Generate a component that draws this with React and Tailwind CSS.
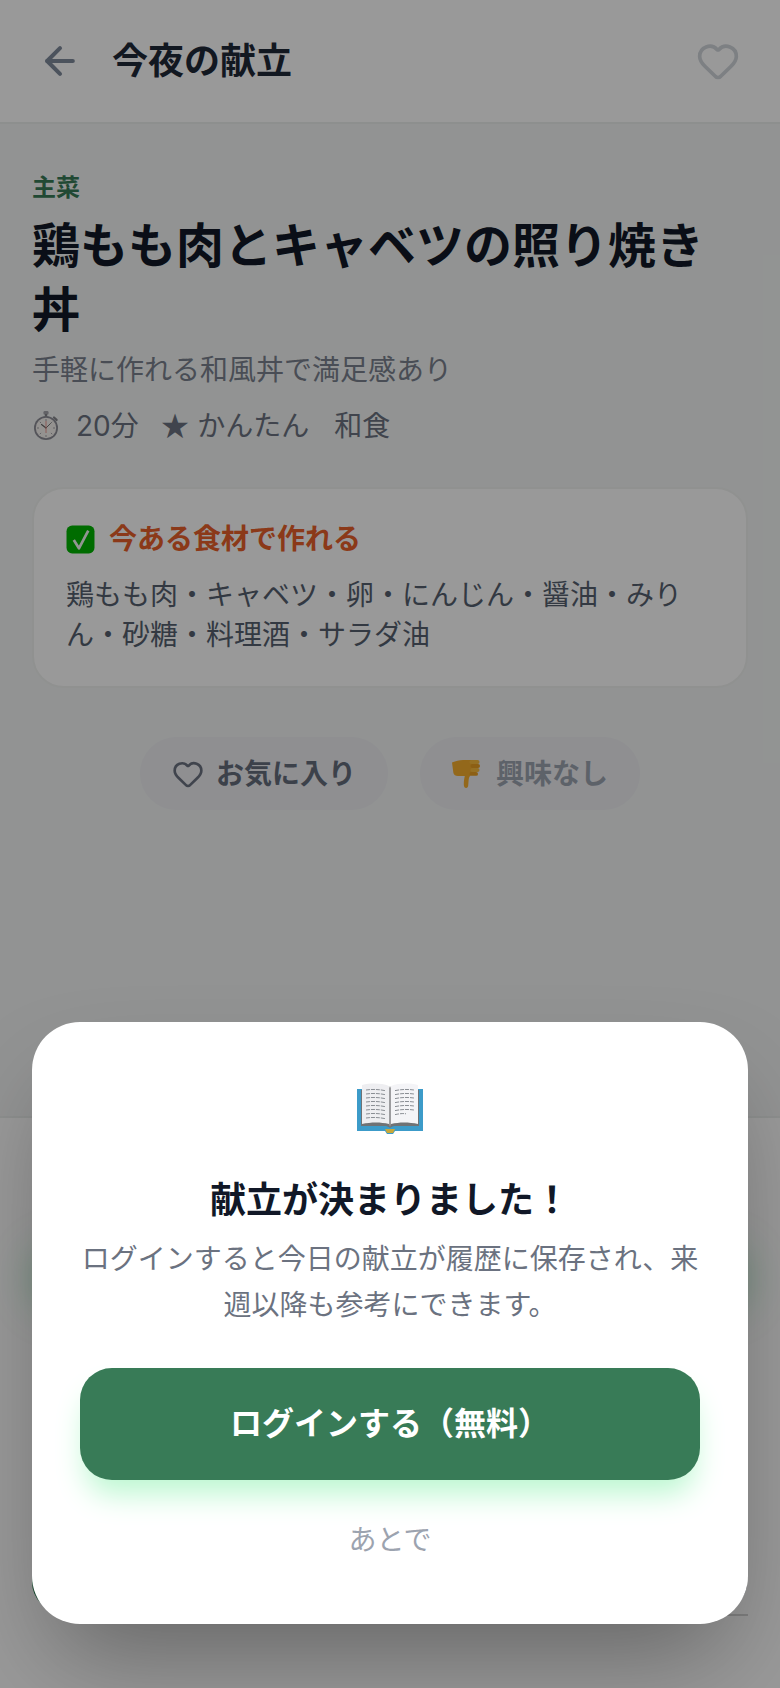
import React from "react";
import { ArrowLeft, Heart } from "lucide-react";

function Stopwatch() {
  return (
    <svg width="28" height="30" viewBox="0 0 28 30" className="shrink-0">
      <rect x="11.5" y="0" width="5" height="3.6" rx="1.2" fill="#a3a3aa" />
      <rect x="12.8" y="3" width="2.4" height="3.5" fill="#85858c" />
      <path d="M22 6.5l2.6 2.4" stroke="#85858c" strokeWidth="2.2" strokeLinecap="round" />
      <circle cx="14" cy="17" r="12" fill="#8d8d96" />
      <circle cx="14" cy="17" r="10.2" fill="#f7f4f1" />
      <path d="M14 8v2M14 24v2M5 17h2M21 17h2M7.8 10.8l1.3 1.3M20.2 10.8l-1.3 1.3M7.8 23.2l1.3-1.3M20.2 23.2l-1.3-1.3" stroke="#9a9aa0" strokeWidth="0.9" />
      <path d="M14 17L9.5 13.5" stroke="#666" strokeWidth="1.1" strokeLinecap="round" />
      <path d="M14 17L18.5 12.5" stroke="#666" strokeWidth="0.9" strokeLinecap="round" />
      <path d="M14 22V10" stroke="#e8807a" strokeWidth="0.8" />
    </svg>
  );
}

function CheckBoxEmoji() {
  return (
    <svg width="29" height="29" viewBox="0 0 28 28" className="shrink-0">
      <rect x="0.5" y="0.5" width="27" height="27" rx="5.5" fill="#00b400" />
      <path d="M7.5 14.5l5 8L21.5 5.5" fill="none" stroke="#f4f9f4" strokeWidth="2.6" strokeLinejoin="round" />
    </svg>
  );
}

function ThumbsDown() {
  return (
    <svg width="28" height="30" viewBox="0 0 28 30" className="shrink-0">
      <path d="M0 3.5C4 2 7 1 11 1h8c1.5 0 2 1 2 2.5v10c0 1-.8 1.8-2 2.6-1.6 1.2-2.2 3-2.4 5.4l-.4 5c-.1 1.6-.9 2.5-2 2.5-1.4 0-2.4-1.4-2.4-3.6 0-3.2.4-5.6 1-8.4H6c-2.6 0-4-1.2-4.6-3z" fill="#f6ae2d" />
      <rect x="17.5" y="1" width="10" height="4" rx="2" fill="#f8bb3d" />
      <rect x="18.5" y="5" width="9.5" height="4" rx="2" fill="#e99f22" />
      <rect x="18.5" y="9" width="9" height="4" rx="2" fill="#f8bb3d" />
      <rect x="17.5" y="13" width="8.5" height="3.8" rx="1.9" fill="#e99f22" />
    </svg>
  );
}

function BookEmoji() {
  return (
    <svg width="66" height="52" viewBox="0 0 66 52">
      <path d="M0 7h66v42H38l-2 3h-6l-2-3H0z" fill="#3c9bc9" />
      <path d="M4 44h25c1 0 3 1 4 2 1-1 3-2 4-2h25V8H4z" fill="#6f7275" />
      <path d="M5 3c9-2 19-2 27 1v38c-8-2-18-2-27 0z" fill="#eeeef1" />
      <path d="M61 3c-9-2-19-2-27 1v38c8-2 18-2 27 0z" fill="#f4f4f7" />
      <path d="M32 4l1 2 1-2v38l-1 3-1-3z" fill="#9c9c9f" />
      <path d="M28 47h10l-2 4h-6z" fill="#c8a83a" />
      <g stroke="#8a8e94" strokeWidth="1" strokeDasharray="4 1">
        <path d="M9 8c6-.8 12-.8 19 .6M9 12c6-.8 12-.8 19 .6M9 16c6-.8 12-.8 19 .6M9 20c6-.8 12-.8 19 .6M9 24c6-.8 12-.8 19 .6M9 28c6-.8 12-.8 19 .6M9 32c6-.8 12-.8 19 .6M9 36c6-.8 12-.8 19 .6" fill="none" />
        <path d="M38 8.6c7-1.4 13-1.4 19-.6M38 12.6c7-1.4 13-1.4 19-.6M38 16.6c7-1.4 13-1.4 19-.6M38 20.6c7-1.4 13-1.4 19-.6M38 24.6c7-1.4 13-1.4 19-.6M38 28.6c7-1.4 13-1.4 19-.6M38 32.6c6-1.2 8-1.2 11-.8" fill="none" />
      </g>
    </svg>
  );
}

export default function App() {
  return (
    <div className="relative flex h-[1688px] w-full flex-col overflow-hidden bg-[#f3f6f5] font-['Inter','Noto_Sans_CJK_JP',sans-serif]">
      <header className="flex h-[124px] shrink-0 items-center justify-between border-b-2 border-[#eceeed] bg-white pl-[38px] pr-10">
        <div className="flex items-center gap-[30px]">
          <ArrowLeft size={44} strokeWidth={2.2} className="text-[#7f8a9c]" />
          <h1 className="text-[36px] font-bold leading-[48px] text-[#1f2937]">今夜の献立</h1>
        </div>
        <Heart size={44} strokeWidth={2} className="text-[#d1d5db]" />
      </header>

      <main className="flex-1 px-8 pt-12">
        <p className="text-[24px] font-bold leading-8 text-[#387b57]">主菜</p>
        <h2 className="mt-[10px] text-[48px] font-bold leading-[64px] text-[#111827]">鶏もも肉とキャベツの照り焼き丼</h2>
        <p className="mt-2 text-[28px] leading-10 text-[#7a818e]">手軽に作れる和風丼で満足感あり</p>
        <div className="mt-4 flex items-center text-[28px] leading-10 text-[#6b7280]">
          <Stopwatch />
          <span className="ml-4">20分</span>
          <span className="ml-[21px] font-['DejaVu_Sans'] text-[34px] leading-10">★</span>
          <span className="ml-[7px]">かんたん</span>
          <span className="ml-[25px]">和食</span>
        </div>

        <section className="mt-[41px] rounded-[32px] border-2 border-[#f0f2f1] bg-white px-8 pb-[31px] pt-[30px]">
          <div className="flex items-center gap-[14px] text-[28px] font-bold leading-10 text-[#e8602a]">
            <CheckBoxEmoji />
            <span>今ある食材で作れる</span>
          </div>
          <p className="mt-4 text-[28px] leading-10 text-[#55606f]">鶏もも肉・キャベツ・卵・にんじん・醤油・みりん・砂糖・料理酒・サラダ油</p>
        </section>

        <div className="mt-[49px] flex justify-center gap-8">
          <button className="flex h-[73px] w-[248px] items-center justify-center gap-3 rounded-full bg-[#eeeef2] text-[28px] font-bold text-[#646d7c]">
            <Heart size={32} strokeWidth={2} className="text-[#6b7280]" />
            <span>お気に入り</span>
          </button>
          <button className="flex h-[73px] w-[220px] items-center justify-center gap-4 rounded-full bg-[#eeeef2] text-[28px] font-bold text-[#9ca3af]">
            <ThumbsDown />
            <span>興味なし</span>
          </button>
        </div>
      </main>

      <footer className="flex h-[572px] shrink-0 flex-col border-t-2 border-[#eceeed] bg-white px-8">
        <div className="mt-[114px] h-[60px] rounded-[32px] bg-[#387b57] shadow-[0_16px_40px_rgba(34,197,94,0.35)]" />
        <div className="mr-px mt-[214px] h-[106px] rounded-[30px] bg-gradient-to-r from-[#1f7a4a] to-[#374151]" />
        <div className="mt-[2px] h-0.5 w-1/2 self-end bg-[#d6d6d6]" />
      </footer>

      <div className="absolute inset-0 flex items-end bg-black/40 px-8 pb-16">
        <div className="flex h-[602px] w-full flex-col items-center rounded-[48px] bg-white p-12 shadow-[0_50px_100px_-24px_rgba(0,0,0,0.35)]">
          <div className="mt-3 flex h-[72px] items-start">
            <BookEmoji />
          </div>
          <h3 className="mt-[21px] text-[36px] font-bold leading-[50px] text-[#111827]">献立が決まりました！</h3>
          <p className="mt-3 w-full text-center text-[28px] leading-[45.5px] text-[#6b7280]">ログインすると今日の献立が履歴に保存され、来週以降も参考にできます。</p>
          <button className="mt-10 flex h-28 w-full shrink-0 items-center justify-center rounded-[32px] bg-[#387b57] text-[32px] font-bold text-white shadow-[0_20px_30px_-6px_#bbf7d0]">ログインする（無料）</button>
          <button className="mt-6 py-4 text-[28px] leading-10 text-[#9ca3af]">あとで</button>
        </div>
      </div>
    </div>
  );
}
